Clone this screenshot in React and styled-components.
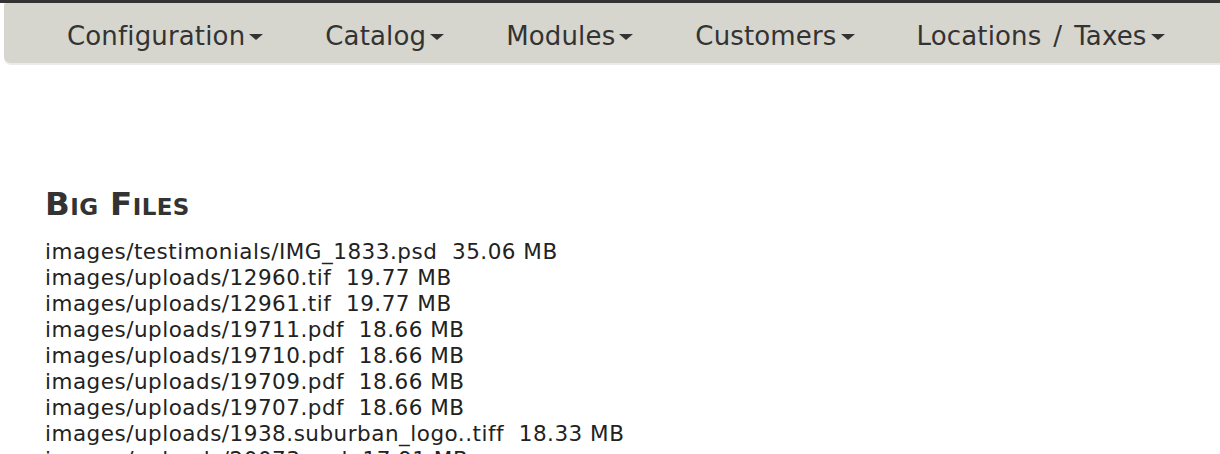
import React from "react";
import styled, { createGlobalStyle } from "styled-components";

const Global = createGlobalStyle`
  html, body { margin: 0; padding: 0; background: #fff; }
  body { font-family: "DejaVu Sans", Verdana, sans-serif; color: #333; overflow: hidden; }
`;

const TopStrip = styled.div`
  height: 3px;
  background: #333;
`;

const NavBar = styled.nav`
  margin-left: 4px;
  height: 60px;
  background: #d6d6ce;
  border-radius: 2px 0 0 7px;
  box-shadow: 0 2px 0 #ebebeb;
`;

const NavList = styled.ul`
  list-style: none;
  margin: 0;
  padding: 0 0 0 32px;
  display: flex;
  height: 100%;
  align-items: center;
  white-space: nowrap;
`;

const NavItem = styled.li`
  display: flex;
  align-items: center;
  padding: 5px 31px 0;
  font-size: 26px;
  letter-spacing: 0.15px;
  word-spacing: 3.5px;
  color: #333;
`;

const Caret = styled.span`
  display: inline-block;
  margin-left: 4px;
  margin-top: 2px;
  width: 0;
  height: 0;
  border-left: 7px solid transparent;
  border-right: 7px solid transparent;
  border-top: 6px solid #333;
`;

const Main = styled.main`
  padding: 0 45px;
`;

const Heading = styled.h2`
  margin: 123px 0 17px;
  font-size: 32.5px;
  line-height: 36px;
  letter-spacing: 0.4px;
  font-weight: bold;
  font-variant: small-caps;
  color: #333;
`;

const FileList = styled.ul`
  list-style: none;
  margin: 0;
  padding: 0;
`;

const FileRow = styled.li`
  font-size: 21.5px;
  line-height: 26px;
  letter-spacing: 0.5px;
  white-space: pre;
  color: #222;
`;

const navItems = ["Configuration", "Catalog", "Modules", "Customers", "Locations / Taxes"];

const files = [
  ["images/testimonials/IMG_1833.psd", "35.06 MB"],
  ["images/uploads/12960.tif", "19.77 MB"],
  ["images/uploads/12961.tif", "19.77 MB"],
  ["images/uploads/19711.pdf", "18.66 MB"],
  ["images/uploads/19710.pdf", "18.66 MB"],
  ["images/uploads/19709.pdf", "18.66 MB"],
  ["images/uploads/19707.pdf", "18.66 MB"],
  ["images/uploads/1938.suburban_logo..tiff", "18.33 MB"],
  ["images/uploads/20073.psd", "17.91 MB"],
];

export default function App() {
  return (
    <>
      <Global />
      <TopStrip />
      <NavBar>
        <NavList>
          {navItems.map((n) => (
            <NavItem key={n}>
              {n}
              <Caret />
            </NavItem>
          ))}
        </NavList>
      </NavBar>
      <Main>
        <Heading>Big Files</Heading>
        <FileList>
          {files.map(([p, s]) => (
            <FileRow key={p}>{`${p}  ${s}`}</FileRow>
          ))}
        </FileList>
      </Main>
    </>
  );
}
